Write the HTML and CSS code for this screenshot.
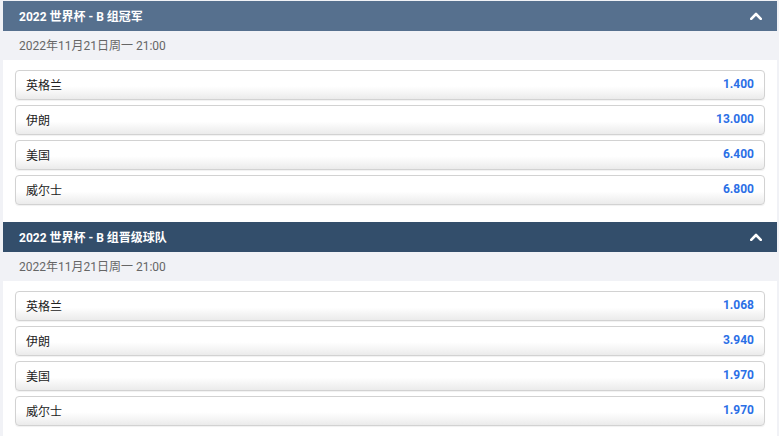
FILE: index.html
```html
<!DOCTYPE html>
<html lang="zh-CN">
<head>
<meta charset="utf-8">
<title>2022 世界杯 - B 组</title>
<link rel="stylesheet" href="styles.css">
</head>
<body>
<div class="markets">
  <section class="market">
    <header class="market-head head-light">
      <span class="market-title">2022 世界杯 - B 组冠军</span>
      <svg class="chevron" width="12" height="8" viewBox="0 0 12 8"><path d="M1.2 6.8 L6 2 L10.8 6.8" fill="none" stroke="#fff" stroke-width="2.6" stroke-linecap="round" stroke-linejoin="round"/></svg>
    </header>
    <div class="market-date">2022年11月21日周一 21:00</div>
    <div class="selections">
      <div class="sel"><span class="team">英格兰</span><span class="odds">1.400</span></div>
      <div class="sel"><span class="team">伊朗</span><span class="odds">13.000</span></div>
      <div class="sel"><span class="team">美国</span><span class="odds">6.400</span></div>
      <div class="sel"><span class="team">威尔士</span><span class="odds">6.800</span></div>
    </div>
  </section>
  <section class="market">
    <header class="market-head head-dark">
      <span class="market-title">2022 世界杯 - B 组晋级球队</span>
      <svg class="chevron" width="12" height="8" viewBox="0 0 12 8"><path d="M1.2 6.8 L6 2 L10.8 6.8" fill="none" stroke="#fff" stroke-width="2.6" stroke-linecap="round" stroke-linejoin="round"/></svg>
    </header>
    <div class="market-date">2022年11月21日周一 21:00</div>
    <div class="selections">
      <div class="sel"><span class="team">英格兰</span><span class="odds">1.068</span></div>
      <div class="sel"><span class="team">伊朗</span><span class="odds">3.940</span></div>
      <div class="sel"><span class="team">美国</span><span class="odds">1.970</span></div>
      <div class="sel"><span class="team">威尔士</span><span class="odds">1.970</span></div>
    </div>
  </section>
</div>
</body>
</html>
```
FILE: styles.css
```css
* { box-sizing: border-box; }

html, body { height: 100%; }

body {
  margin: 0;
  padding: 1px 2px 0 3px;
  background: #f1f2f6;
  font-family: Roboto, "Noto Sans CJK SC", sans-serif;
  font-size: 12px;
  color: #333;
  overflow: hidden;
}

.markets {
  display: flex;
  flex-direction: column;
}

.market-head {
  height: 30px;
  display: flex;
  align-items: center;
  justify-content: space-between;
  padding: 0 15px 2px 16px;
  color: #fff;
  font-weight: 700;
  font-size: 12px;
}

.head-light { background: #56708e; }
.head-dark { background: #334e6b; }

.chevron { display: block; margin-top: 1px; }

.market-date {
  height: 29px;
  display: flex;
  align-items: center;
  padding: 0 0 2px 16px;
  background: #f1f2f6;
  color: #666;
  font-size: 12px;
}

.selections {
  background: #fff;
  padding: 10px 12px 17px 12px;
  display: flex;
  flex-direction: column;
  gap: 5px;
}

.sel {
  height: 30px;
  display: flex;
  align-items: center;
  justify-content: space-between;
  padding: 0 10px 2px 10px;
  border: 1px solid #d2d2d2;
  border-radius: 4px;
  background: linear-gradient(#ffffff 0%, #ffffff 55%, #ebebeb 100%);
  box-shadow: 0 1px 1px rgba(0, 0, 0, 0.06);
}

.team {
  color: #222;
  font-size: 12px;
}

.odds {
  color: #2b6fe6;
  font-weight: 700;
  font-size: 12px;
}
```
